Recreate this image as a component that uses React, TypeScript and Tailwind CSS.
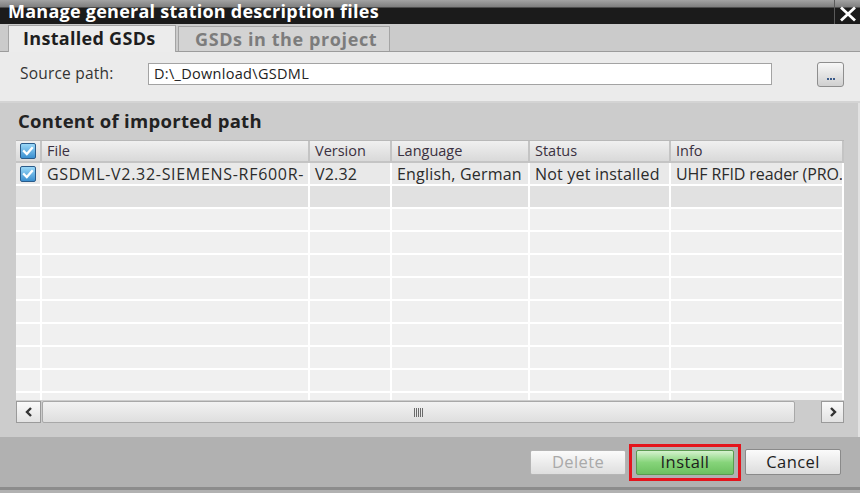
import React from 'react';

const font = { fontFamily: '"Open Sans", "Noto Sans", sans-serif' };

const CheckBox = () => (
    <div className="w-[16px] h-[16px] rounded-[2px] border border-[#2a5b8a] bg-[linear-gradient(#9ad8f8,#3a8fd0)] flex items-center justify-center">
        <svg width="12" height="12" viewBox="0 0 12 12">
            <path d="M2 6.2 L4.8 9 L10 3" fill="none" stroke="#ffffff" strokeWidth="2.3" strokeLinecap="square" />
        </svg>
    </div>
);

const cols = [
    { w: 'w-[26px]', label: '' },
    { w: 'w-[268px]', label: 'File' },
    { w: 'w-[82px]', label: 'Version' },
    { w: 'w-[138px]', label: 'Language' },
    { w: 'w-[141px]', label: 'Status' },
    { w: 'w-[173px]', label: 'Info' },
];

const firstRow = ['', 'GSDML-V2.32-SIEMENS-RF600R-', 'V2.32', 'English, German', 'Not yet installed', 'UHF RFID reader (PRO.'];

const cellTracking = ['', 'tracking-[0.7px]', 'tracking-[0.2px]', 'tracking-[0.2px]', 'tracking-[0.2px]', 'tracking-[-0.1px]'];

const App = () => {
    return (
        <div className="w-[860px] h-[493px] bg-[#b1b1b1] flex flex-col overflow-hidden" style={font}>
            {/* Title bar */}
            <div className="h-[24px] flex bg-[linear-gradient(#a3a3a3_0px,#7e7e7e_7px,#1b1b1b_8px,#1b1b1b_100%)]">
                <div className="flex-1 pl-[8px] text-white font-bold text-[18px] leading-[23px] tracking-[0.25px]">
                    Manage general station description files
                </div>
                <div className="w-[26px] border-l border-[#5a5a5a] flex items-center justify-center pt-[3px]">
                    <svg width="18" height="16" viewBox="0 0 18 16">
                        <path d="M2 1.5 L16 14.5 M16 1.5 L2 14.5" stroke="#ffffff" strokeWidth="2.8" />
                    </svg>
                </div>
            </div>

            {/* Tabs */}
            <div className="h-[28px] bg-[#cbcbcb] flex items-end pl-[8px] border-b border-[#9c9c9c]">
                <div className="w-[168px] h-[27px] bg-[#ececec] border-t border-l border-r border-[#a4a4a4] -mb-px text-[18px] font-bold text-[#1e1e1e] pl-[14px] leading-[25px] tracking-[0.3px]">
                    Installed GSDs
                </div>
                <div className="ml-[2px] w-[212px] h-[25px] bg-[#d3d3d3] border border-b-0 border-[#a4a4a4] text-[18px] font-bold text-[#7c7c7c] pl-[16px] leading-[24px] tracking-[0.6px]">
                    GSDs in the project
                </div>
            </div>

            {/* Source path */}
            <div className="h-[51px] bg-[#ebebeb] flex items-center pl-[20px] border-b-[2px] border-[#d4d4d4]">
                <div className="w-[128px] text-[15.5px] text-[#333] -mt-[6px] tracking-[0.2px]">Source path:</div>
                <div className="w-[624px] h-[22px] bg-white border border-[#a3a3a3] text-[14.5px] text-[#222] pl-[5px] leading-[20px] -mt-[6px] tracking-[0.3px]">
                    D:\_Download\GSDML
                </div>
                <div className="ml-[45px] w-[27px] h-[25px] rounded-[3px] border border-[#8e8e8e] bg-[linear-gradient(#f7f7f7,#d0d0d0)] flex items-end justify-center pb-[6px] -mt-[4px]">
                    <div className="flex gap-[1px]">
                        <span className="w-[2px] h-[2px] bg-[#3a5a8a]" />
                        <span className="w-[2px] h-[2px] bg-[#3a5a8a]" />
                        <span className="w-[2px] h-[2px] bg-[#3a5a8a]" />
                    </div>
                </div>
            </div>

            {/* Content section */}
            <div className="h-[334px] bg-[#cccccc] pl-[16px] border-r-[2px] border-[#e2e2e2] flex flex-col">
                <div className="h-[37px] pt-[6px] pl-[2px] text-[18.5px] font-bold text-[#222] leading-[24px] tracking-[0.3px]">
                    Content of imported path
                </div>
                <div className="w-[828px] flex flex-col">
                    {/* Header */}
                    <div className="flex h-[23px] border-t border-[#b8b8b8]">
                        {cols.map((c, i) => (
                            <div
                                key={i}
                                className={`${c.w} h-full border-r-[2px] border-b-[2px] border-[#c4c4c4] bg-[linear-gradient(#f0f0f0,#d9d9d9)] text-[14.5px] text-[#3a3040] pl-[5px] leading-[20px] flex items-center`}
                            >
                                {i === 0 ? <div className="-ml-[1px]"><CheckBox /></div> : c.label}
                            </div>
                        ))}
                    </div>
                    {/* Body */}
                    <div className="h-[237px] overflow-hidden flex flex-col">
                        {Array.from({ length: 11 }).map((_, r) => (
                            <div key={r} className="flex h-[23px] shrink-0">
                                {cols.map((c, i) => (
                                    <div
                                        key={i}
                                        className={`${c.w} h-full border-r-[2px] border-b-[2px] border-white ${r === 1 ? 'bg-[#e1e1e1]' : r === 0 ? 'bg-[#e9e9e9]' : 'bg-[#f0f0f0]'} text-[16px] text-[#2b2b2b] ${i === 0 ? 'pl-[4px]' : 'pl-[5px]'} flex items-center whitespace-nowrap overflow-hidden ${cellTracking[i]}`}
                                    >
                                        {r === 0 ? (i === 0 ? <CheckBox /> : firstRow[i]) : ''}
                                    </div>
                                ))}
                            </div>
                        ))}
                    </div>
                    {/* Horizontal scrollbar */}
                    <div className="h-[22px] flex items-stretch mt-[1px]">
                        <div className="w-[25px] border border-[#9a9a9a] bg-[linear-gradient(#fafafa,#e2e2e2)] flex items-center justify-center">
                            <svg width="10" height="12" viewBox="0 0 10 12">
                                <path d="M7 2 L3 6 L7 10" fill="none" stroke="#333" strokeWidth="2.4" />
                            </svg>
                        </div>
                        <div className="ml-[1px] w-[753px] border border-[#a8a8a8] rounded-[2px] bg-[linear-gradient(#f2f2f2,#dedede)] flex items-center justify-center">
                            <div className="flex gap-[1px]">
                                {[0, 1, 2, 3, 4].map((k) => (
                                    <span key={k} className="w-[1px] h-[9px] bg-[#6a6a6a]" />
                                ))}
                            </div>
                        </div>
                        <div className="w-[26px]" />
                        <div className="w-[23px] border border-[#9a9a9a] bg-[linear-gradient(#fafafa,#e2e2e2)] flex items-center justify-center">
                            <svg width="10" height="12" viewBox="0 0 10 12">
                                <path d="M3 2 L7 6 L3 10" fill="none" stroke="#333" strokeWidth="2.4" />
                            </svg>
                        </div>
                    </div>
                </div>
            </div>

            {/* Buttons bar */}
            <div className="h-[53px] bg-[#b1b1b1] border-b-[3px] border-[#8c8c8c] flex items-center justify-end pr-[19px]">
                <div className="w-[96px] h-[25px] rounded-[2px] border border-[#b5b5b5] bg-[linear-gradient(#fbfbfb,#dedede)] text-[16.5px] text-[#a9a9a9] flex items-center justify-center tracking-[0.4px]">
                    Delete
                </div>
                <div className="ml-[3px] w-[112px] h-[37px] border-[3px] border-[#e4141c] flex items-center justify-center">
                    <div className="w-[98px] h-[25px] rounded-[2px] border border-[#5a9a50] bg-[linear-gradient(#d6f2cf,#86d47a_50%,#6cc060)] text-[16.5px] text-[#1d1d1d] flex items-center justify-center tracking-[0.4px]">
                        Install
                    </div>
                </div>
                <div className="ml-[4px] w-[96px] h-[26px] rounded-[2px] border border-[#8a8a8a] bg-[linear-gradient(#fbfbfb,#dcdcdc)] text-[16.5px] text-[#1d1d1d] flex items-center justify-center tracking-[0.4px]">
                    Cancel
                </div>
            </div>
        </div>
    );
};

export default App;
